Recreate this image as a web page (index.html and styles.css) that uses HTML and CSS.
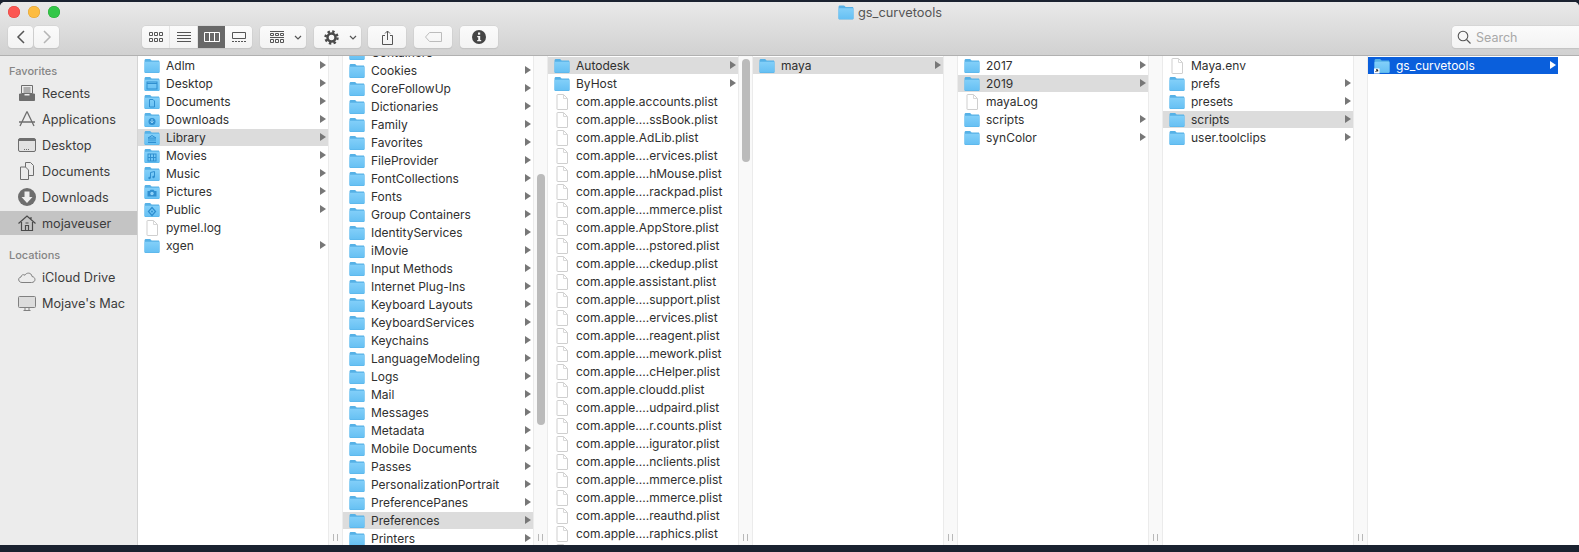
FILE: index.html
```html
<!DOCTYPE html>
<html lang="en">
<head>
<meta charset="utf-8">
<title>gs_curvetools</title>
<link rel="stylesheet" href="styles.css">
</head>
<body>
<svg class="sprite" width="0" height="0" aria-hidden="true">
  <defs>
    <linearGradient id="fg" x1="0" y1="0" x2="0" y2="1"><stop offset="0" stop-color="#82cff9"/><stop offset="1" stop-color="#66c0f3"/></linearGradient>
    <symbol id="f" viewBox="0 0 16 15"><path d="M.5 2.200C.5 1.200 1.100.6 2 .6h3.600c.7 0 1 .2 1.400.7l.6.8h6.600c1 0 1.300.6 1.300 1.500v9.600c0 .9-.4 1.400-1.300 1.400H1.900C1 14.600.5 14.100.5 13.200z" fill="#56b1e6"/><path d="M.5 4.200c0-.6.4-.9 1-.9h13c.6 0 1 .3 1 .9v9c0 .6-.4.9-1 .9h-13c-.6 0-1-.3-1-.9z" fill="url(#fg)"/></symbol>
    <symbol id="d" viewBox="0 0 16 16"><path d="M3.500.5h6L13.500 4.500V15a.5.500 0 0 1-.5.500H3.500A.5.500 0 0 1 3 15V1a.5.500 0 0 1 .5-.5z" fill="#fff" stroke="#cfcfcf"/><path d="M9.500.5v4h4" fill="none" stroke="#d8d8d8"/></symbol>
    <symbol id="f-desktop" viewBox="0 0 16 15"><use href="#f"/><rect x="3" y="5.500" width="10" height="7" fill="none" stroke="#2f8fd0"/><path d="M3 7h10" stroke="#2f8fd0"/></symbol>
    <symbol id="f-docs" viewBox="0 0 16 15"><use href="#f"/><path d="M5.500 5h3.500l1.500 1.500v6h-5z" fill="none" stroke="#2f8fd0"/></symbol>
    <symbol id="f-down" viewBox="0 0 16 15"><use href="#f"/><circle cx="8" cy="9" r="3.500" fill="#2f8fd0"/><path d="M8 6.500v3.500M6.500 8.800 8 10.500l1.500-1.700" stroke="#9bd8fa" fill="none"/></symbol>
    <symbol id="f-lib" viewBox="0 0 16 15"><use href="#f"/><path d="M4 7.500 8 5l4 2.500zM5 8v3M7 8v3M9 8v3M11 8v3M4 12h8" stroke="#2f8fd0" fill="none"/></symbol>
    <symbol id="f-mov" viewBox="0 0 16 15"><use href="#f"/><rect x="4" y="5.500" width="8" height="7" fill="none" stroke="#2f8fd0"/><path d="M6.500 5.500v7M9.500 5.500v7M4 9h8" stroke="#2f8fd0"/></symbol>
    <symbol id="f-mus" viewBox="0 0 16 15"><use href="#f"/><path d="M6.500 11.500V6l4-1v5.500" stroke="#2f8fd0" fill="none"/><circle cx="5.500" cy="11.500" r="1.200" fill="#2f8fd0"/><circle cx="9.500" cy="10.500" r="1.200" fill="#2f8fd0"/></symbol>
    <symbol id="f-pic" viewBox="0 0 16 15"><use href="#f"/><path d="M3.500 6.500h2l1-1.200h3l1 1.200h2v5.500h-9z" fill="#2f8fd0"/><circle cx="8" cy="9" r="1.700" fill="#8fd2f8"/></symbol>
    <symbol id="f-pub" viewBox="0 0 16 15"><use href="#f"/><path d="M8 5l3.500 4L8 13 4.500 9z" fill="none" stroke="#2f8fd0" stroke-width="1.300"/><circle cx="8" cy="9" r="1" fill="#2f8fd0"/></symbol>
    <symbol id="f-link" viewBox="0 0 16 15"><use href="#f"/><rect x="0" y="10" width="5.500" height="5" fill="#fff"/><path d="M1.500 13.500l2-2M2 11.300h1.700V13" stroke="#111" fill="none"/></symbol>
  </defs>
</svg>

<div class="window">
  <header class="toolbar">
    <div class="titlebar">
      <div class="lights"><i class="light red"></i><i class="light amber"></i><i class="light green"></i></div>
      <div class="title"><svg class="title-ico"><use href="#f"/></svg><span>gs_curvetools</span></div>
    </div>
    <div class="tools">
      <div class="btn nav"><svg width="10" height="14" viewBox="0 0 10 14"><path d="M8 1 2 7l6 6" fill="none" stroke="#555" stroke-width="1.500"/></svg></div>
      <div class="btn nav"><svg width="10" height="14" viewBox="0 0 10 14"><path d="M2 1l6 6-6 6" fill="none" stroke="#b5b5b5" stroke-width="1.500"/></svg></div>
      <div class="segs">
        <div class="seg"><svg width="14" height="10" viewBox="0 0 14 10" fill="none" stroke="#555"><path d="M.5.500h3v3h-3zM5.500.500h3v3h-3zM10.500.500h3v3h-3zM.5 6.500h3v3h-3zM5.500 6.500h3v3h-3zM10.500 6.500h3v3h-3z"/></svg></div>
        <div class="seg"><svg width="14" height="10" viewBox="0 0 14 10" stroke="#555"><path d="M0 .5h14M0 3.500h14M0 6.500h14M0 9.500h14"/></svg></div>
        <div class="seg active"><svg width="16" height="10" viewBox="0 0 16 10" fill="none" stroke="#fff"><path d="M.5.500h15v9H.5zM5.500.500v9M10.500.500v9"/></svg></div>
        <div class="seg"><svg width="14" height="10" viewBox="0 0 14 10" fill="none" stroke="#555"><path d="M.5.500h13v6H.5z"/><path d="M0 9.500h14" stroke-dasharray="2 1"/></svg></div>
      </div>
      <div class="btn group"><svg width="14" height="13" viewBox="0 0 14 13" fill="none" stroke="#555"><path d="M0 .5h14M.5 2.500h3v2h-3zM5.500 2.500h3v2h-3zM10.500 2.500h3v2h-3zM0 6.500h14M.5 8.500h3v3h-3zM5.500 8.500h3v3h-3zM10.500 8.500h3v3h-3z"/></svg><svg class="chev" width="8" height="5" viewBox="0 0 8 5"><path d="M1 1l3 3 3-3" fill="none" stroke="#555" stroke-width="1.200"/></svg></div>
      <div class="btn gear"><svg width="15" height="15" viewBox="0 0 15 15"><circle cx="7.500" cy="7.500" r="6" fill="none" stroke="#4a4a4a" stroke-width="2.400" stroke-dasharray="2.400 2.310"/><circle cx="7.500" cy="7.500" r="4" fill="none" stroke="#4a4a4a" stroke-width="2.500"/></svg><svg class="chev" width="8" height="5" viewBox="0 0 8 5"><path d="M1 1l3 3 3-3" fill="none" stroke="#555" stroke-width="1.200"/></svg></div>
      <div class="btn share"><svg width="11" height="15" viewBox="0 0 11 15" fill="none" stroke="#555"><path d="M3 5.500H.5v9h10v-9H8M5.500 10V1M3 3.500 5.500 1 8 3.500"/></svg></div>
      <div class="btn tag"><svg width="17" height="10" viewBox="0 0 17 10" fill="none" stroke="#bcbcbc"><path d="M4.500.5h12v9h-12L.5 5z"/></svg></div>
      <div class="btn info"><svg width="14" height="14" viewBox="0 0 14 14"><circle cx="7" cy="7" r="7" fill="#444"/><rect x="6" y="2.500" width="2.200" height="2.200" fill="#f6f6f6"/><path d="M5.200 6h3v4h1v1.300H5.200V10h1V7.300h-1z" fill="#f6f6f6"/></svg></div>
      <div class="search"><svg width="14" height="14" viewBox="0 0 14 14" fill="none" stroke="#555" stroke-width="1.100"><circle cx="6" cy="6" r="4.800"/><path d="M9.500 9.500l4 4"/></svg><span>Search</span></div>
    </div>
  </header>

  <div class="body">
    <nav class="sidebar">
      <h2 class="side-head">Favorites</h2>
      <div class="side-item"><svg class="side-ico" viewBox="0 0 18 18" fill="none" stroke="#6e6e6e"><path d="M3.500 1.500h11v8h-11zM5.500 4h7M5.500 6h7M5.500 8h7"/><path d="M1.500 10h4.500v2h6v-2h4.500v6.500h-15z" fill="#6e6e6e"/></svg><span>Recents</span></div>
      <div class="side-item"><svg class="side-ico" viewBox="0 0 18 18" fill="none" stroke="#6e6e6e" stroke-width="1.300"><path d="M9 1.500 2 16M9 1.500 16 16M5 12h8M1 12h16"/></svg><span>Applications</span></div>
      <div class="side-item"><svg class="side-ico" viewBox="0 0 18 18" fill="none" stroke="#6e6e6e"><rect x=".5" y="2.500" width="17" height="13" rx="1.500" fill="#e2e2e2"/><path d="M.5 4h17" stroke-width="2"/><path d="M6 13.500h6" stroke-dasharray="1 1"/></svg><span>Desktop</span></div>
      <div class="side-item"><svg class="side-ico" viewBox="0 0 18 18" fill="none" stroke="#6e6e6e"><path d="M7.500.5h5l3 3v10h-8z"/><path d="M2.500 5h5l3 3v9.500h-8z" fill="#ececec"/></svg><span>Documents</span></div>
      <div class="side-item"><svg class="side-ico" viewBox="0 0 18 18"><circle cx="9" cy="9" r="9" fill="#6e6e6e"/><path d="M6.500 3.500h5V9h3L9 15 3.500 9h3z" fill="#efefef"/></svg><span>Downloads</span></div>
      <div class="side-item current"><svg class="side-ico" viewBox="0 0 18 18" fill="none" stroke="#4a4a4a" stroke-width="1.200"><path d="M.5 9.500 9 2l8.500 7.500M3.500 8v8.500h11V8M13 3v2.500"/><path d="M7.500 16.500v-5h3v5M7.500 9h3"/></svg><span>mojaveuser</span></div>
      <h2 class="side-head later">Locations</h2>
      <div class="side-item"><svg class="side-ico" viewBox="0 0 18 18" fill="none" stroke="#808080"><path d="M4 14.500c-4 0-4.500-5-1-5.500 0-2 2.500-3 4-1.800C8 4.500 13.500 4 14 8.500c4 .5 4 6-.5 6z"/></svg><span>iCloud Drive</span></div>
      <div class="side-item"><svg class="side-ico" viewBox="0 0 18 18" fill="none" stroke="#808080"><rect x=".5" y="2.500" width="17" height="11" rx="1" fill="#dcdcdc"/><path d="M7 14v2M11 14v2M5.500 16.500h7"/></svg><span>Mojave's Mac</span></div>
    </nav>

    <section class="column">
      <div class="list">
        <div class="row"><svg class="ico"><use href="#f"/></svg><span class="name">Adlm</span><i class="arrow"></i></div>
        <div class="row"><svg class="ico"><use href="#f-desktop"/></svg><span class="name">Desktop</span><i class="arrow"></i></div>
        <div class="row"><svg class="ico"><use href="#f-docs"/></svg><span class="name">Documents</span><i class="arrow"></i></div>
        <div class="row"><svg class="ico"><use href="#f-down"/></svg><span class="name">Downloads</span><i class="arrow"></i></div>
        <div class="row on"><svg class="ico"><use href="#f-lib"/></svg><span class="name">Library</span><i class="arrow"></i></div>
        <div class="row"><svg class="ico"><use href="#f-mov"/></svg><span class="name">Movies</span><i class="arrow"></i></div>
        <div class="row"><svg class="ico"><use href="#f-mus"/></svg><span class="name">Music</span><i class="arrow"></i></div>
        <div class="row"><svg class="ico"><use href="#f-pic"/></svg><span class="name">Pictures</span><i class="arrow"></i></div>
        <div class="row"><svg class="ico"><use href="#f-pub"/></svg><span class="name">Public</span><i class="arrow"></i></div>
        <div class="row"><svg class="ico"><use href="#d"/></svg><span class="name">pymel.log</span></div>
        <div class="row"><svg class="ico"><use href="#f"/></svg><span class="name">xgen</span><i class="arrow"></i></div>
      </div>
      <div class="gutter"><span class="handle"></span></div>
    </section>

    <section class="column">
      <div class="list scrolled">
        <div class="row"><svg class="ico"><use href="#f"/></svg><span class="name">Containers</span><i class="arrow"></i></div>
        <div class="row"><svg class="ico"><use href="#f"/></svg><span class="name">Cookies</span><i class="arrow"></i></div>
        <div class="row"><svg class="ico"><use href="#f"/></svg><span class="name">CoreFollowUp</span><i class="arrow"></i></div>
        <div class="row"><svg class="ico"><use href="#f"/></svg><span class="name">Dictionaries</span><i class="arrow"></i></div>
        <div class="row"><svg class="ico"><use href="#f"/></svg><span class="name">Family</span><i class="arrow"></i></div>
        <div class="row"><svg class="ico"><use href="#f"/></svg><span class="name">Favorites</span><i class="arrow"></i></div>
        <div class="row"><svg class="ico"><use href="#f"/></svg><span class="name">FileProvider</span><i class="arrow"></i></div>
        <div class="row"><svg class="ico"><use href="#f"/></svg><span class="name">FontCollections</span><i class="arrow"></i></div>
        <div class="row"><svg class="ico"><use href="#f"/></svg><span class="name">Fonts</span><i class="arrow"></i></div>
        <div class="row"><svg class="ico"><use href="#f"/></svg><span class="name">Group Containers</span><i class="arrow"></i></div>
        <div class="row"><svg class="ico"><use href="#f"/></svg><span class="name">IdentityServices</span><i class="arrow"></i></div>
        <div class="row"><svg class="ico"><use href="#f"/></svg><span class="name">iMovie</span><i class="arrow"></i></div>
        <div class="row"><svg class="ico"><use href="#f"/></svg><span class="name">Input Methods</span><i class="arrow"></i></div>
        <div class="row"><svg class="ico"><use href="#f"/></svg><span class="name">Internet Plug-Ins</span><i class="arrow"></i></div>
        <div class="row"><svg class="ico"><use href="#f"/></svg><span class="name">Keyboard Layouts</span><i class="arrow"></i></div>
        <div class="row"><svg class="ico"><use href="#f"/></svg><span class="name">KeyboardServices</span><i class="arrow"></i></div>
        <div class="row"><svg class="ico"><use href="#f"/></svg><span class="name">Keychains</span><i class="arrow"></i></div>
        <div class="row"><svg class="ico"><use href="#f"/></svg><span class="name">LanguageModeling</span><i class="arrow"></i></div>
        <div class="row"><svg class="ico"><use href="#f"/></svg><span class="name">Logs</span><i class="arrow"></i></div>
        <div class="row"><svg class="ico"><use href="#f"/></svg><span class="name">Mail</span><i class="arrow"></i></div>
        <div class="row"><svg class="ico"><use href="#f"/></svg><span class="name">Messages</span><i class="arrow"></i></div>
        <div class="row"><svg class="ico"><use href="#f"/></svg><span class="name">Metadata</span><i class="arrow"></i></div>
        <div class="row"><svg class="ico"><use href="#f"/></svg><span class="name">Mobile Documents</span><i class="arrow"></i></div>
        <div class="row"><svg class="ico"><use href="#f"/></svg><span class="name">Passes</span><i class="arrow"></i></div>
        <div class="row"><svg class="ico"><use href="#f"/></svg><span class="name">PersonalizationPortrait</span><i class="arrow"></i></div>
        <div class="row"><svg class="ico"><use href="#f"/></svg><span class="name">PreferencePanes</span><i class="arrow"></i></div>
        <div class="row on"><svg class="ico"><use href="#f"/></svg><span class="name">Preferences</span><i class="arrow"></i></div>
        <div class="row"><svg class="ico"><use href="#f"/></svg><span class="name">Printers</span><i class="arrow"></i></div>
      </div>
      <div class="gutter"><span class="thumb thumb-lib"></span><span class="handle"></span></div>
    </section>

    <section class="column">
      <div class="list">
        <div class="row on"><svg class="ico"><use href="#f"/></svg><span class="name">Autodesk</span><i class="arrow"></i></div>
        <div class="row"><svg class="ico"><use href="#f"/></svg><span class="name">ByHost</span><i class="arrow"></i></div>
        <div class="row"><svg class="ico"><use href="#d"/></svg><span class="name">com.apple.accounts.plist</span></div>
        <div class="row"><svg class="ico"><use href="#d"/></svg><span class="name">com.apple....ssBook.plist</span></div>
        <div class="row"><svg class="ico"><use href="#d"/></svg><span class="name">com.apple.AdLib.plist</span></div>
        <div class="row"><svg class="ico"><use href="#d"/></svg><span class="name">com.apple....ervices.plist</span></div>
        <div class="row"><svg class="ico"><use href="#d"/></svg><span class="name">com.apple....hMouse.plist</span></div>
        <div class="row"><svg class="ico"><use href="#d"/></svg><span class="name">com.apple....rackpad.plist</span></div>
        <div class="row"><svg class="ico"><use href="#d"/></svg><span class="name">com.apple....mmerce.plist</span></div>
        <div class="row"><svg class="ico"><use href="#d"/></svg><span class="name">com.apple.AppStore.plist</span></div>
        <div class="row"><svg class="ico"><use href="#d"/></svg><span class="name">com.apple....pstored.plist</span></div>
        <div class="row"><svg class="ico"><use href="#d"/></svg><span class="name">com.apple....ckedup.plist</span></div>
        <div class="row"><svg class="ico"><use href="#d"/></svg><span class="name">com.apple.assistant.plist</span></div>
        <div class="row"><svg class="ico"><use href="#d"/></svg><span class="name">com.apple....support.plist</span></div>
        <div class="row"><svg class="ico"><use href="#d"/></svg><span class="name">com.apple....ervices.plist</span></div>
        <div class="row"><svg class="ico"><use href="#d"/></svg><span class="name">com.apple....reagent.plist</span></div>
        <div class="row"><svg class="ico"><use href="#d"/></svg><span class="name">com.apple....mework.plist</span></div>
        <div class="row"><svg class="ico"><use href="#d"/></svg><span class="name">com.apple....cHelper.plist</span></div>
        <div class="row"><svg class="ico"><use href="#d"/></svg><span class="name">com.apple.cloudd.plist</span></div>
        <div class="row"><svg class="ico"><use href="#d"/></svg><span class="name">com.apple....udpaird.plist</span></div>
        <div class="row"><svg class="ico"><use href="#d"/></svg><span class="name">com.apple....r.counts.plist</span></div>
        <div class="row"><svg class="ico"><use href="#d"/></svg><span class="name">com.apple....igurator.plist</span></div>
        <div class="row"><svg class="ico"><use href="#d"/></svg><span class="name">com.apple....nclients.plist</span></div>
        <div class="row"><svg class="ico"><use href="#d"/></svg><span class="name">com.apple....mmerce.plist</span></div>
        <div class="row"><svg class="ico"><use href="#d"/></svg><span class="name">com.apple....mmerce.plist</span></div>
        <div class="row"><svg class="ico"><use href="#d"/></svg><span class="name">com.apple....reauthd.plist</span></div>
        <div class="row"><svg class="ico"><use href="#d"/></svg><span class="name">com.apple....raphics.plist</span></div>
        <div class="row"><svg class="ico"><use href="#d"/></svg></div>
      </div>
      <div class="gutter"><span class="thumb thumb-pref"></span><span class="handle"></span></div>
    </section>

    <section class="column">
      <div class="list">
        <div class="row on"><svg class="ico"><use href="#f"/></svg><span class="name">maya</span><i class="arrow"></i></div>
      </div>
      <div class="gutter"><span class="handle"></span></div>
    </section>

    <section class="column">
      <div class="list">
        <div class="row"><svg class="ico"><use href="#f"/></svg><span class="name">2017</span><i class="arrow"></i></div>
        <div class="row on"><svg class="ico"><use href="#f"/></svg><span class="name">2019</span><i class="arrow"></i></div>
        <div class="row"><svg class="ico"><use href="#d"/></svg><span class="name">mayaLog</span></div>
        <div class="row"><svg class="ico"><use href="#f"/></svg><span class="name">scripts</span><i class="arrow"></i></div>
        <div class="row"><svg class="ico"><use href="#f"/></svg><span class="name">synColor</span><i class="arrow"></i></div>
      </div>
      <div class="gutter"><span class="handle"></span></div>
    </section>

    <section class="column">
      <div class="list">
        <div class="row"><svg class="ico"><use href="#d"/></svg><span class="name">Maya.env</span></div>
        <div class="row"><svg class="ico"><use href="#f"/></svg><span class="name">prefs</span><i class="arrow"></i></div>
        <div class="row"><svg class="ico"><use href="#f"/></svg><span class="name">presets</span><i class="arrow"></i></div>
        <div class="row on"><svg class="ico"><use href="#f"/></svg><span class="name">scripts</span><i class="arrow"></i></div>
        <div class="row"><svg class="ico"><use href="#f"/></svg><span class="name">user.toolclips</span><i class="arrow"></i></div>
      </div>
      <div class="gutter"><span class="handle"></span></div>
    </section>

    <section class="column last">
      <div class="list">
        <div class="row selected"><svg class="ico"><use href="#f-link"/></svg><span class="name">gs_curvetools</span><i class="arrow"></i></div>
      </div>
    </section>
  </div>
</div>
</body>
</html>
```
FILE: styles.css
```css
* { box-sizing: border-box; }
html, body { margin: 0; height: 100%; }
body {
  background: #1a2230;
  font-family: Inter, "Liberation Sans", sans-serif;
  font-size: 12px;
  color: #2f2f2f;
  overflow: hidden;
  padding-top: 2px;
}
.sprite { position: absolute; }
.window {
  height: 543px;
  display: flex;
  flex-direction: column;
  overflow: hidden;
  background: #fff;
  border-radius: 5px 5px 0 0;
}

/* toolbar */
.toolbar {
  height: 54px;
  flex: none;
  background: linear-gradient(#e9e9e9, #d1d1d1);
  border-bottom: 1px solid #b1b1b1;
}
.titlebar { height: 24px; display: flex; align-items: center; padding: 0 0 4px 8px; }
.lights { display: flex; gap: 8px; }
.light { width: 12px; height: 12px; border-radius: 50%; display: block; }
.red { background: #fc5753; box-shadow: inset 0 0 0 .5px #e0443e; }
.amber { background: #fdbc40; box-shadow: inset 0 0 0 .5px #dea034; }
.green { background: #33c748; box-shadow: inset 0 0 0 .5px #27aa35; }
.title { margin-left: 778px; display: flex; align-items: center; gap: 4px; color: #555; font-size: 12.8px; }
.title-ico { width: 16px; height: 15px; }
.tools { display: flex; align-items: stretch; height: 22px; padding-left: 8px; }
.btn, .segs, .search {
  background: linear-gradient(#fbfbfb, #f3f3f3);
  border-radius: 4px;
  box-shadow: 0 0 0 .5px #cdcdcd, 0 1px 1px #b9b9b9;
}
.btn { display: flex; align-items: center; justify-content: center; }
.nav { width: 25px; margin-right: 1px; }
.segs {
  display: grid;
  grid-template-columns: 28px 28px 27px 27px;
  width: 110px;
  margin-left: 82px;
  overflow: hidden;
}
.seg { display: flex; align-items: center; justify-content: center; border-right: 1px solid #e3e3e3; }
.seg:last-child { border-right: 0; }
.seg.active { background: #686868; border-right: 0; }
.group, .gear { justify-content: flex-start; padding-left: 10px; gap: 10px; margin-left: 8px; }
.group { width: 46px; }
.gear { width: 47px; }
.share { width: 38px; margin-left: 7px; }
.tag { width: 38px; margin-left: 8px; }
.info { width: 38px; margin-left: 8px; }
.search {
  margin-left: auto;
  width: 127px;
  display: flex;
  align-items: center;
  gap: 5px;
  padding-left: 5px;
  border-radius: 4px 0 0 4px;
  color: #a8a8a8;
  font-size: 12.5px;
}

/* main area */
.body { flex: 1; display: flex; min-height: 0; }
.sidebar {
  width: 138px;
  flex: none;
  display: flex;
  flex-direction: column;
  background: #ececec;
  border-right: 1px solid #d4d4d4;
  padding-top: 7px;
  color: #3c3c3c;
}
.side-head { margin: 0; flex: none; height: 17px; line-height: 17px; padding-left: 9px; font-size: 11px; font-weight: 500; color: #858585; }
.side-head.later { margin-top: 11px; }
.side-item { flex: none; height: 24px; margin: 1px 0; display: flex; align-items: center; gap: 6px; padding-left: 18px; font-size: 12.7px; }
.side-item.current { background: #c4c4c4; }
.side-ico { width: 18px; height: 18px; flex: none; }

.column { width: 205px; flex: none; display: flex; min-height: 0; overflow: hidden; }
.column.last { flex: 1; }
.list { width: 190px; flex: none; padding-top: 1px; }
.list.scrolled { margin-top: -13px; }
.gutter {
  width: 15px;
  flex: none;
  position: relative;
  background: #f9f9f9;
  border-left: 1px solid #ebebeb;
  border-right: 1px solid #ebebeb;
}
.handle {
  position: absolute;
  left: 4px;
  bottom: 4px;
  width: 5px;
  height: 7px;
  border-left: 1px solid #b8b8b8;
  border-right: 1px solid #b8b8b8;
}
.thumb { position: absolute; width: 8px; border-radius: 4px; background: #bbb; left: 3px; }
.thumb-lib { top: 118px; height: 251px; }
.thumb-pref { top: 3px; height: 103px; }

.row { height: 17px; margin-bottom: 1px; display: flex; align-items: center; position: relative; padding-left: 6px; white-space: nowrap; }
.row.on { background: #dcdcdc; }
.row.selected { background: #0a5fdc; color: #fff; }
.ico { width: 16px; height: 16px; flex: none; }
.name { margin-left: 6px; }
.arrow {
  position: absolute;
  right: 2px;
  top: 4px;
  width: 0;
  height: 0;
  border-left: 6px solid #777;
  border-top: 4px solid transparent;
  border-bottom: 4px solid transparent;
}
.selected .arrow { border-left-color: #fff; }
```
